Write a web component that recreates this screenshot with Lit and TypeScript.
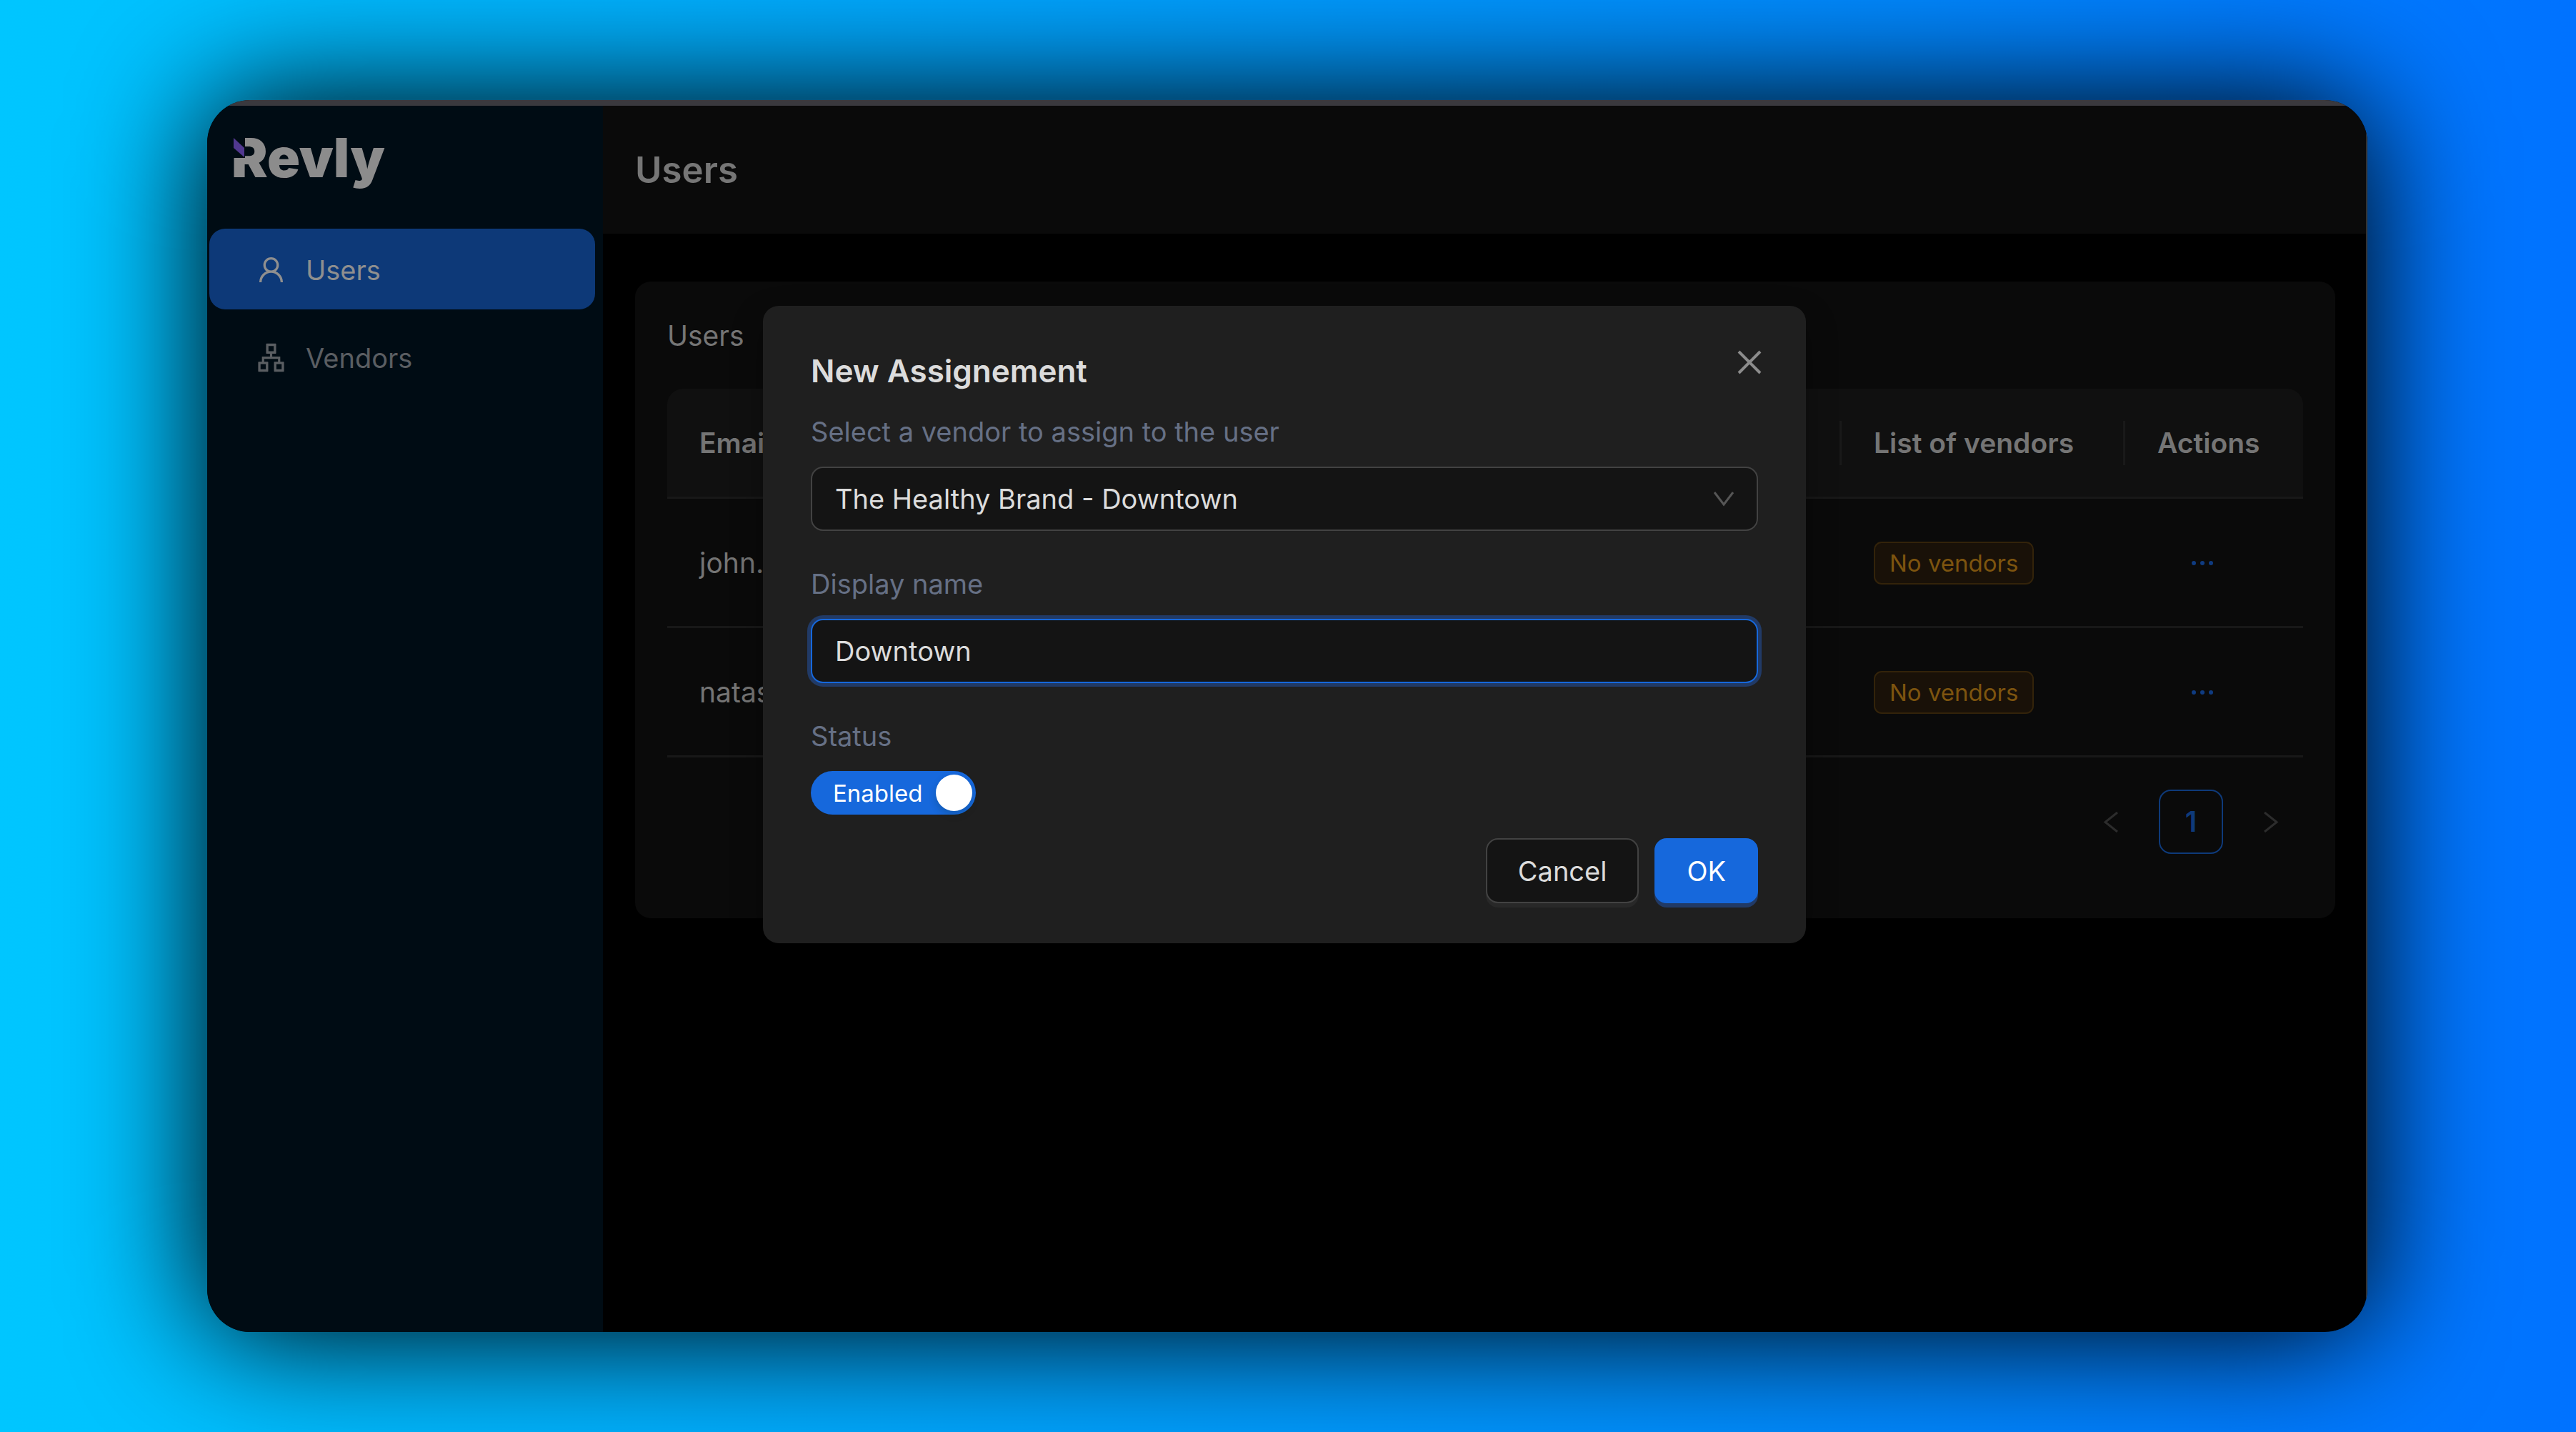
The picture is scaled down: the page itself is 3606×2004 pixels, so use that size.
import { LitElement, html, css, svg } from "lit";
import { customElement, state } from "lit/decorators.js";

const userIcon = svg`<path d="M858.5 763.6a374 374 0 0 0-80.6-119.5 375.63 375.63 0 0 0-119.5-80.6c-.4-.2-.8-.3-1.2-.5C719.5 518 760 444.7 760 362c0-137-111-248-248-248S264 225 264 362c0 82.700 40.500 156 102.800 201.100-.4.2-.8.3-1.200.5-44.800 18.900-85 46-119.500 80.600a375.630 375.630 0 0 0-80.600 119.500A371.700 371.700 0 0 0 136 901.800a8 8 0 0 0 8 8.200h60c4.400 0 7.900-3.500 8-7.800 2-77.200 33-149.500 87.800-204.300 56.700-56.700 132-87.900 212.200-87.900s155.500 31.200 212.200 87.900C779 752.700 810 825 812 902.200c.1 4.400 3.600 7.800 8 7.800h60a8 8 0 0 0 8-8.200c-1-47.800-10.900-94.300-29.500-138.200zM512 534c-45.900 0-89.100-17.900-121.600-50.400S340 407.900 340 362c0-45.900 17.900-89.100 50.400-121.600S466.100 190 512 190s89.100 17.900 121.600 50.400S684 316.100 684 362c0 45.900-17.900 89.100-50.400 121.600S557.900 534 512 534z"/>`;

const apartmentIcon = svg`<path d="M908 640H804V488c0-4.400-3.600-8-8-8H548v-96h108c8.800 0 16-7.200 16-16V80c0-8.800-7.200-16-16-16H368c-8.800 0-16 7.200-16 16v288c0 8.800 7.200 16 16 16h108v96H228c-4.400 0-8 3.600-8 8v152H116c-8.800 0-16 7.200-16 16v288c0 8.800 7.200 16 16 16h288c8.800 0 16-7.200 16-16V656c0-8.800-7.200-16-16-16H292v-88h440v88H620c-8.800 0-16 7.200-16 16v288c0 8.800 7.200 16 16 16h288c8.800 0 16-7.200 16-16V656c0-8.800-7.200-16-16-16zm-564 76v168H176V716h168zm84-408V140h168v168H428zm420 576H680V716h168v168z"/>`;

const icon = (shape: unknown, cls: string) =>
  html`<svg class=${cls} viewBox="0 0 1024 1024" fill="currentColor" aria-hidden="true">${shape}</svg>`;

const line = (d: string, cls: string) =>
  html`<svg class=${cls} viewBox="0 0 34 34" fill="none" stroke="currentColor" aria-hidden="true"><path d=${d} /></svg>`;

interface Row {
  email: string;
  vendors: string;
}

@customElement("app-root")
export class AppRoot extends LitElement {
  static styles = css`
    :host {
      display: block;
      --text: 39px;
      --form-text: 38px;
      --small: 33px;
      --pad: 45px;
      --radius: 22px;
      --field-radius: 17px;
      --primary: #1668dc;
      font-family: Inter, "Liberation Sans", sans-serif;
      font-size: var(--text);
      line-height: 62px;
    }
    * {
      box-sizing: border-box;
    }
    button,
    input,
    select {
      font: inherit;
      color: inherit;
      margin: 0;
    }
    .stage {
      min-height: 100vh;
      display: flex;
      padding: 140px 292px 140px 290px;
      background: linear-gradient(90deg, #00c6ff, #0072ff);
    }
    .shade {
      flex: 1;
      display: flex;
      border-radius: 60px;
      box-shadow: 0 0 180px 4px #000;
    }
    .window {
      position: relative;
      flex: 1;
      display: flex;
      padding-top: 8px;
      border-radius: 60px;
      overflow: hidden;
      background: #000;
    }
    .window::after {
      content: "";
      position: absolute;
      inset: 0;
      border-top: 8px solid #3a393e;
      border-right: 2px solid #333;
      pointer-events: none;
    }
    .sidebar {
      flex: none;
      width: 554px;
      background: #000c14;
      padding: 0 11px 0 3px;
    }
    .logo {
      position: relative;
      height: 172px;
      padding: 26px 0 0 31px;
      font-family: Inter, sans-serif;
      font-weight: 900;
      font-size: 76px;
      line-height: 92px;
      color: #8c8c8c;
    }
    .logo-mark {
      position: absolute;
      left: 33px;
      top: 43px;
      width: 17px;
      height: 30px;
    }
    .nav {
      display: flex;
      flex-direction: column;
      gap: 10px;
    }
    .nav-item {
      display: flex;
      align-items: center;
      gap: 26px;
      height: 113px;
      padding: 2px 64px 0;
      border-radius: var(--radius);
      font-size: var(--form-text);
      color: #5a5e62;
      text-decoration: none;
    }
    .nav-item.active {
      background: #0d3978;
      color: #8f8f8f;
    }
    .nav-icon {
      width: 45px;
      height: 45px;
    }
    .main {
      flex: 1;
      min-width: 0;
      display: flex;
      flex-direction: column;
    }
    .header {
      height: 179px;
      display: flex;
      align-items: center;
      padding: 0 var(--pad);
      background: #0a0a0a;
    }
    .header h1 {
      margin: 0;
      font-size: 51px;
      font-weight: 600;
      color: #767676;
    }
    .card {
      margin: 67px var(--pad) 0;
      padding: var(--pad);
      border-radius: var(--radius);
      background: #0a0a0a;
      color: #757575;
    }
    .card-title {
      margin: 0 0 43px;
      font-size: var(--text);
      font-weight: 400;
    }
    .table {
      width: 100%;
      border-collapse: separate;
      border-spacing: 0;
      table-layout: fixed;
    }
    .col-vendors {
      width: 397px;
    }
    .col-actions {
      width: 249px;
    }
    .table th {
      height: 154px;
      padding: 0;
      text-align: left;
      font-weight: 600;
      background: #101010;
      border-bottom: 3px solid #181818;
    }
    .table th:first-child {
      border-top-left-radius: var(--radius);
    }
    .table th:last-child {
      border-top-right-radius: var(--radius);
    }
    .th-label {
      display: block;
      padding-left: var(--pad);
      border-right: 3px solid #191919;
    }
    .table th:last-child .th-label {
      border-right: 0;
    }
    .table td {
      height: 181px;
      padding: 2px var(--pad) 0;
      border-bottom: 3px solid #181818;
    }
    .tag {
      display: block;
      width: fit-content;
      padding: 0 20px;
      border: 2px solid #33230a;
      border-radius: 11px;
      background: #191108;
      color: #7d540f;
      font-size: var(--small);
      line-height: 56px;
    }
    .more {
      display: flex;
      align-items: center;
      height: 90px;
      padding: 0 41px;
      border: 0;
      background: none;
      color: #0f3b80;
    }
    .more-icon {
      width: 45px;
      height: 45px;
    }
    .pager {
      display: flex;
      justify-content: flex-end;
      gap: 22px;
      margin: var(--pad) 0;
    }
    .page {
      display: grid;
      place-items: center;
      width: 90px;
      height: 90px;
      padding: 0;
      border: 0;
      border-radius: var(--field-radius);
      background: none;
      color: #2c2c2c;
    }
    .page.current {
      border: 2px solid #0e3a7a;
      color: #0e3a7a;
      font-weight: 600;
    }
    .arrow {
      width: 34px;
      height: 34px;
      stroke-width: 3;
    }
    .overlay {
      position: absolute;
      inset: 0;
      display: flex;
      justify-content: center;
      align-items: flex-start;
      padding: 288px 8px 0 0;
    }
    .modal {
      position: relative;
      width: 1460px;
      padding: 56px 67px;
      border-radius: var(--radius);
      background: #1f1f1f;
      color: #dcdcdc;
      font-size: var(--form-text);
      box-shadow: 0 17px 45px rgba(0, 0, 0, 0.3);
    }
    .modal-title {
      margin: 0 0 20px;
      font-size: 44px;
      font-weight: 600;
      line-height: 70px;
    }
    .close {
      position: absolute;
      top: 48px;
      right: 48px;
      display: grid;
      place-items: center;
      width: 62px;
      height: 62px;
      padding: 0;
      border: 0;
      background: none;
      color: #8c8c8c;
    }
    .close-icon {
      width: 34px;
      height: 34px;
      stroke-width: 4;
    }
    .form {
      display: flex;
      flex-direction: column;
      gap: 44px;
      margin: 0;
    }
    .field {
      display: flex;
      flex-direction: column;
      align-items: stretch;
      gap: 19px;
    }
    .label {
      color: #667085;
      line-height: 60px;
    }
    .select-box {
      display: grid;
      align-items: center;
    }
    .control {
      grid-area: 1 / 1;
      appearance: none;
      width: 100%;
      height: 90px;
      padding: 0 32px;
      border: 2px solid #424242;
      border-radius: var(--field-radius);
      background: #141414;
      outline: none;
    }
    .control.focused {
      border-color: #1668dc;
      box-shadow: 0 0 0 5px #213a66;
    }
    .caret {
      grid-area: 1 / 1;
      justify-self: end;
      margin-right: 31px;
      width: 34px;
      height: 34px;
      stroke-width: 3;
      color: #565656;
      pointer-events: none;
    }
    .switch {
      display: flex;
      align-items: center;
      align-self: flex-start;
      gap: 18px;
      height: 61px;
      padding: 0 5px 0 31px;
      border: 0;
      border-radius: 31px;
      background: var(--primary);
      color: #fff;
      font-size: var(--small);
    }
    .knob {
      width: 51px;
      height: 51px;
      border-radius: 50%;
      background: #fff;
      box-shadow: 0 5px 11px rgba(0, 35, 11, 0.2);
    }
    .footer {
      display: flex;
      justify-content: flex-end;
      gap: 22px;
      margin-top: 33px;
    }
    .btn {
      height: 91px;
      padding: 0 43px;
      border: 2px solid #424242;
      border-radius: var(--field-radius);
      background: #141414;
      box-shadow: 0 6px 0 #282828;
    }
    .btn.primary {
      border-color: var(--primary);
      background: var(--primary);
      color: #fff;
      box-shadow: 0 6px 0 #213a66;
    }
  `;

  @state() private enabled = true;

  private rows: Row[] = [
    { email: "john.", vendors: "No vendors" },
    { email: "natas", vendors: "No vendors" },
  ];

  render() {
    return html`
      <div class="stage">
        <div class="shade">
          <div class="window">
            <aside class="sidebar">
              <div class="logo">
                Revly
                <svg class="logo-mark" viewBox="0 0 17 30" aria-hidden="true">
                  <rect width="17" height="30" fill="#000c14" />
                  <polygon points="1,2 16,16 16,29 1,16" fill="#51388f" />
                </svg>
              </div>
              <nav class="nav">
                <a class="nav-item active" href="#users">${icon(userIcon, "nav-icon")}<span>Users</span></a>
                <a class="nav-item" href="#vendors">${icon(apartmentIcon, "nav-icon")}<span>Vendors</span></a>
              </nav>
            </aside>
            <main class="main">
              <header class="header"><h1>Users</h1></header>
              <section class="card">
                <h2 class="card-title">Users</h2>
                <table class="table">
                  <colgroup>
                    <col />
                    <col class="col-vendors" />
                    <col class="col-actions" />
                  </colgroup>
                  <thead>
                    <tr>
                      ${["Email", "List of vendors", "Actions"].map(
                        (name) => html`<th scope="col"><span class="th-label">${name}</span></th>`
                      )}
                    </tr>
                  </thead>
                  <tbody>
                    ${this.rows.map(
                      (row) => html`<tr>
                        <td>${row.email}</td>
                        <td><span class="tag">${row.vendors}</span></td>
                        <td>
                          <button class="more" type="button">
                            <svg class="more-icon" viewBox="0 0 45 45" fill="currentColor" aria-hidden="true">
                              <circle cx="10" cy="22" r="3" />
                              <circle cx="22" cy="22" r="3" />
                              <circle cx="34" cy="22" r="3" />
                            </svg>
                          </button>
                        </td>
                      </tr>`
                    )}
                  </tbody>
                </table>
                <nav class="pager">
                  <button class="page" type="button">${line("M26 4 9 17.500 26 31", "arrow")}</button>
                  <button class="page current" type="button">1</button>
                  <button class="page" type="button">${line("M8 4 25 17.500 8 31", "arrow")}</button>
                </nav>
              </section>
            </main>
            <div class="overlay">
              <section class="modal" role="dialog" aria-labelledby="title">
                <h2 class="modal-title" id="title">New Assignement</h2>
                <button class="close" type="button">${line("M2 2 32 32M32 2 2 32", "close-icon")}</button>
                <form class="form">
                  <div class="field">
                    <label class="label" for="vendor">Select a vendor to assign to the user</label>
                    <div class="select-box">
                      <select class="control" id="vendor">
                        <option>The Healthy Brand - Downtown</option>
                      </select>
                      ${line("M4 8 17 25 30 8", "caret")}
                    </div>
                  </div>
                  <div class="field">
                    <label class="label" for="name">Display name</label>
                    <input class="control focused" id="name" type="text" value="Downtown" />
                  </div>
                  <div class="field">
                    <label class="label" for="status">Status</label>
                    <button
                      class="switch"
                      id="status"
                      type="button"
                      role="switch"
                      aria-checked=${this.enabled ? "true" : "false"}
                    >
                      <span>Enabled</span><span class="knob"></span>
                    </button>
                  </div>
                </form>
                <div class="footer">
                  <button class="btn" type="button">Cancel</button>
                  <button class="btn primary" type="button">OK</button>
                </div>
              </section>
            </div>
          </div>
        </div>
      </div>
    `;
  }
}
